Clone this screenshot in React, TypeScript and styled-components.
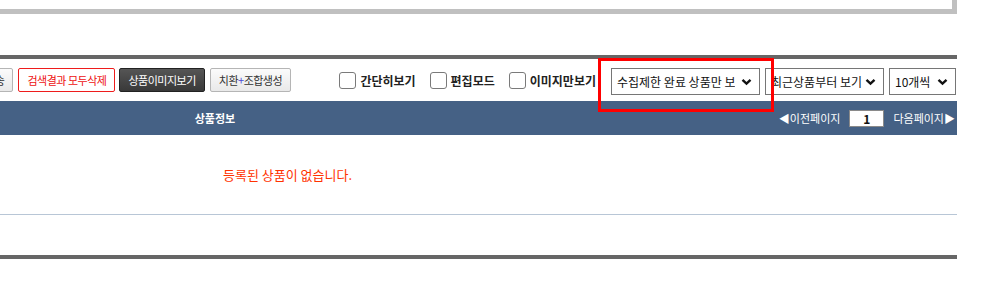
import React from 'react';
import styled, { createGlobalStyle } from 'styled-components';

const GlobalStyle = createGlobalStyle`
  html, body {
    margin: 0;
    padding: 0;
    background: #fff;
    font-family: "Noto Sans CJK KR", "Noto Sans", sans-serif;
    overflow: hidden;
  }
`;

const Page = styled.div`
  width: 957px;
`;

const TopBox = styled.div`
  height: 9px;
  border-right: 5px solid #c0c0c0;
  border-bottom: 5px solid #c0c0c0;
  margin-bottom: 41px;
`;

const Section = styled.div`
  position: relative;
  border-top: 4px solid #666;
`;

const Toolbar = styled.div`
  height: 42px;
  box-sizing: border-box;
  padding: 9px 1px 0 0;
  display: flex;
  justify-content: space-between;
  align-items: flex-start;
`;

const Group = styled.div`
  display: flex;
  align-items: flex-start;
`;

type Variant = 'plain' | 'danger' | 'dark';

const Button = styled.button<{ $variant?: Variant; $offset?: number }>`
  height: 24px;
  padding: 0 8px;
  margin-left: ${(p) => (p.$offset !== undefined ? p.$offset : 4)}px;
  font-family: inherit;
  font-size: 11px;
  letter-spacing: -0.5px;
  border-radius: 2px;
  cursor: pointer;
  white-space: nowrap;
  border: 1px solid
    ${(p) => (p.$variant === 'danger' ? '#ee1c1c' : p.$variant === 'dark' ? '#222' : '#b5b5b5')};
  color: ${(p) => (p.$variant === 'danger' ? '#ee1111' : p.$variant === 'dark' ? '#fff' : '#333')};
  background: ${(p) =>
    p.$variant === 'dark'
      ? 'linear-gradient(#555, #393939)'
      : p.$variant === 'danger'
      ? '#fff'
      : 'linear-gradient(#fbfbfb, #e9e9e9)'};
`;

const Plus = styled.span`
  color: #4b4bd6;
`;

const CheckLabel = styled.label<{ $gap?: number }>`
  display: flex;
  align-items: center;
  height: 24px;
  margin-right: ${(p) => p.$gap ?? 13}px;
  font-size: 12px;
  font-weight: 700;
  color: #222;
  white-space: nowrap;
`;

const Check = styled.input.attrs({ type: 'checkbox' })`
  appearance: none;
  width: 17px;
  height: 17px;
  margin: 0 4px 0 0;
  box-sizing: border-box;
  border: 1px solid #7a7a7a;
  border-radius: 3px;
  background: #fff;
`;

const SelectWrap = styled.div<{ $width: number }>`
  position: relative;
  width: ${(p) => p.$width}px;
  margin-left: 5px;
`;

const Select = styled.select<{ $arrowRoom?: number }>`
  appearance: none;
  width: 100%;
  height: 27px;
  box-sizing: border-box;
  padding: 0 ${(p) => p.$arrowRoom ?? 16}px 0 5px;
  border: 1px solid #767676;
  border-radius: 0;
  background: #fff;
  font-family: inherit;
  font-size: 12px;
  color: #111;
  outline: none;
`;

const Chevron = styled.svg`
  position: absolute;
  right: 8px;
  top: 10px;
  pointer-events: none;
`;

const Highlight = styled.div`
  position: absolute;
  left: 598px;
  top: -1px;
  width: 176px;
  height: 54px;
  box-sizing: border-box;
  border: 3px solid #ff0000;
  pointer-events: none;
`;

const HeaderBar = styled.div`
  height: 34px;
  background: #456185;
  display: flex;
  align-items: center;
  justify-content: space-between;
  color: #fff;
`;

const HeaderTitle = styled.div`
  width: 430px;
  text-align: center;
  font-size: 11px;
  font-weight: 700;
`;

const Pager = styled.div`
  display: flex;
  align-items: center;
  padding-right: 2px;
  font-size: 11px;
`;

const PageInput = styled.input`
  width: 35px;
  height: 17px;
  box-sizing: border-box;
  margin: 0 9px;
  border: 1px solid #8a8a8a;
  text-align: center;
  font-family: inherit;
  font-size: 12px;
  font-weight: 700;
  color: #111;
  padding: 0;
`;

const EmptyRow = styled.div`
  height: 79px;
  border-bottom: 1px solid #b8c6d6;
  display: flex;
  align-items: center;
  padding-left: 223px;
  color: #ff3300;
  font-size: 13px;
`;

const BottomBar = styled.div`
  margin-top: 40px;
  height: 4px;
  background: #666;
`;

const ChevronIcon = () => (
  <Chevron width="11" height="8" viewBox="0 0 11 8">
    <path d="M1.5 1.8 L5.5 5.6 L9.5 1.8" fill="none" stroke="#111" strokeWidth="2.4" />
  </Chevron>
);

const App: React.FC = () => {
  return (
    <Page>
      <GlobalStyle />
      <TopBox />
      <Section>
        <Toolbar>
          <Group>
            <Button $offset={-43}>엑셀전송</Button>
            <Button $variant="danger" $offset={5}>검색결과 모두삭제</Button>
            <Button $variant="dark">상품이미지보기</Button>
            <Button $offset={5}>
              치환<Plus>+</Plus>조합생성
            </Button>
          </Group>
          <Group>
            <CheckLabel $gap={14}>
              <Check />
              간단히보기
            </CheckLabel>
            <CheckLabel $gap={14}>
              <Check />
              편집모드
            </CheckLabel>
            <CheckLabel $gap={10}>
              <Check />
              이미지만보기
            </CheckLabel>
            <SelectWrap $width={149}>
              <Select defaultValue="done" $arrowRoom={24}>
                <option value="done">수집제한 완료 상품만 보기</option>
              </Select>
              <ChevronIcon />
            </SelectWrap>
            <SelectWrap $width={119}>
              <Select defaultValue="recent">
                <option value="recent">최근상품부터 보기</option>
              </Select>
              <ChevronIcon />
            </SelectWrap>
            <SelectWrap $width={67}>
              <Select defaultValue="10">
                <option value="10">10개씩</option>
              </Select>
              <ChevronIcon />
            </SelectWrap>
          </Group>
        </Toolbar>
        <Highlight />
        <HeaderBar>
          <HeaderTitle>상품정보</HeaderTitle>
          <Pager>
            ◀이전페이지
            <PageInput defaultValue="1" />
            다음페이지▶
          </Pager>
        </HeaderBar>
        <EmptyRow>등록된 상품이 없습니다.</EmptyRow>
        <BottomBar />
      </Section>
    </Page>
  );
};

export default App;
